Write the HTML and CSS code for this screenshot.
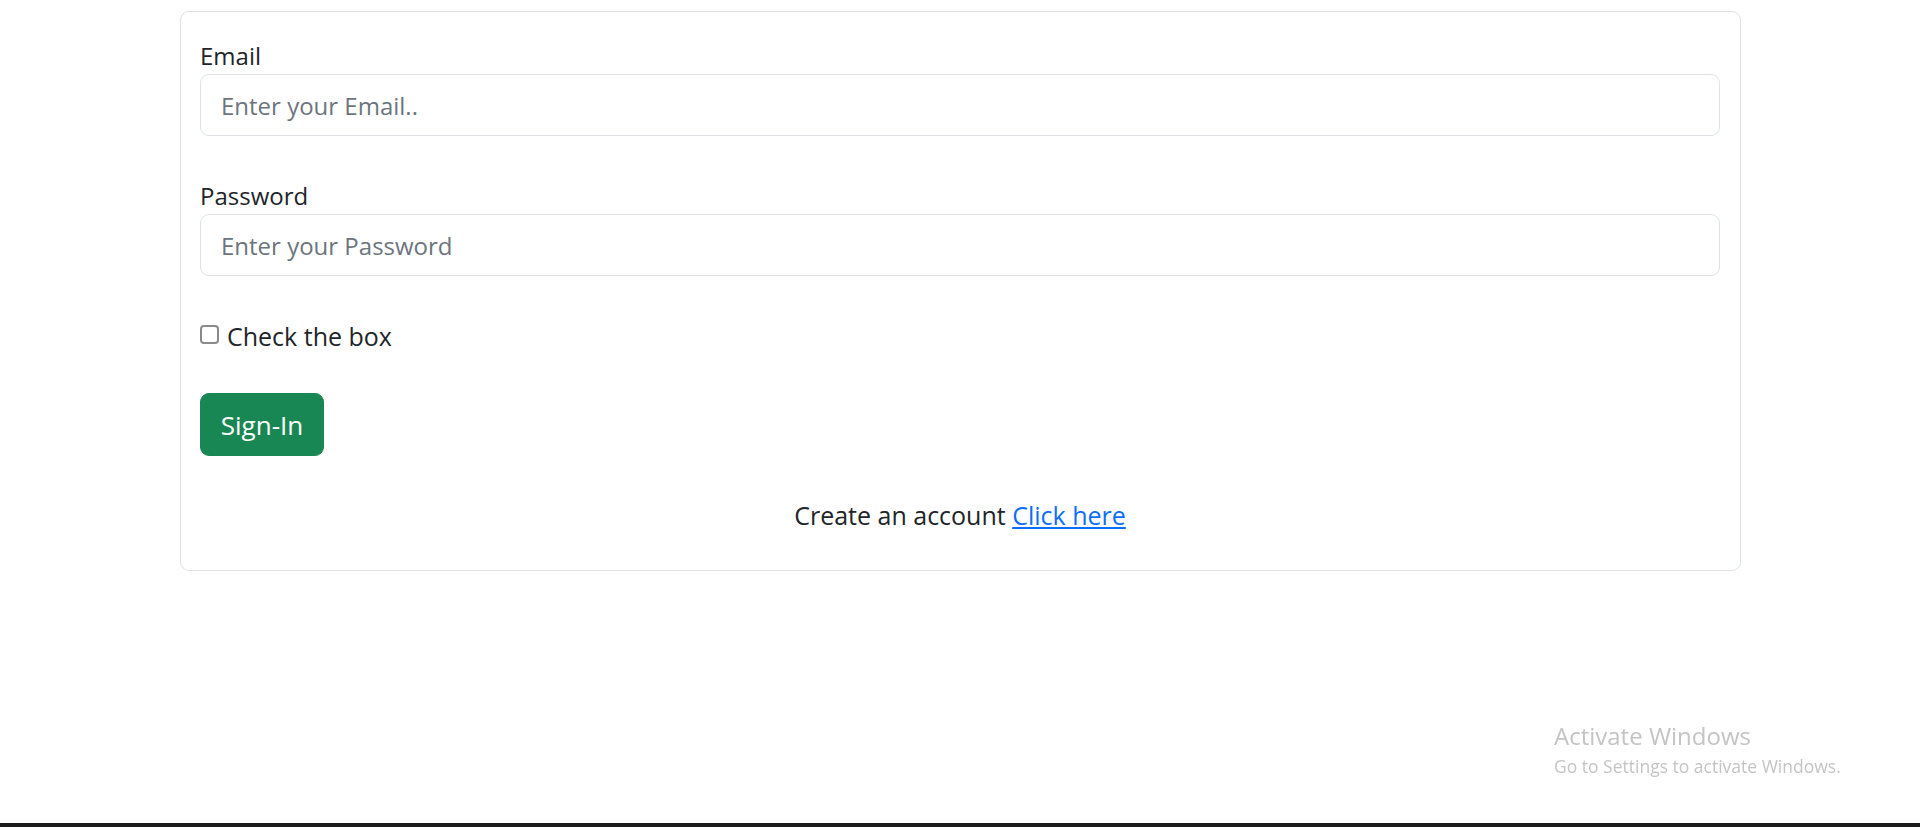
FILE: index.html
```html
<!DOCTYPE html>
<html lang="en">
<head>
<meta charset="utf-8">
<title>Sign In</title>
<link rel="stylesheet" href="styles.css">
</head>
<body>
<main class="page">
  <form class="card">
    <div class="field">
      <label class="label" for="email">Email</label>
      <input class="input" id="email" type="email" placeholder="Enter your Email..">
    </div>
    <div class="field">
      <label class="label" for="password">Password</label>
      <input class="input" id="password" type="password" placeholder="Enter your Password">
    </div>
    <div class="check-row">
      <input class="check" id="check" type="checkbox">
      <label class="check-label" for="check">Check the box</label>
    </div>
    <div class="actions">
      <button class="btn" type="button">Sign-In</button>
    </div>
    <p class="footer-text">Create an account <a class="link" href="#">Click here</a></p>
  </form>
</main>
<div class="watermark">
  <div class="wm-title">Activate Windows</div>
  <div class="wm-sub">Go to Settings to activate Windows.</div>
</div>
<div class="taskbar-edge"></div>
</body>
</html>
```
FILE: styles.css
```css
html, body {
  margin: 0;
  padding: 0;
  background: #ffffff;
}
body {
  font-family: "Open Sans", "Noto Sans", "Liberation Sans", sans-serif;
  color: #212529;
  height: 827px;
  overflow: hidden;
}
.page {
  padding: 11px 179px 0 180px;
}
.card {
  display: flex;
  flex-direction: column;
  border: 1px solid #dee2e6;
  border-radius: 9px;
  padding: 26px 20px 37px 19px;
}
.field {
  display: flex;
  flex-direction: column;
  margin-bottom: 42px;
}
.label {
  font-size: 24px;
  line-height: 36px;
}
.input {
  box-sizing: border-box;
  height: 62px;
  width: 100%;
  border: 1px solid #dee2e6;
  border-radius: 9px;
  padding: 0 20px;
  font-family: inherit;
  font-size: 24px;
  color: #212529;
  background: #fff;
  outline: none;
}
.input::placeholder {
  color: #6c757d;
}
.check-row {
  display: flex;
  align-items: center;
  height: 36px;
  margin-bottom: 39px;
}
.check {
  appearance: none;
  -webkit-appearance: none;
  box-sizing: border-box;
  width: 19px;
  height: 19px;
  margin: 0 8px 0 0;
  border: 2px solid #8a8a8a;
  border-radius: 4px;
  background: #fff;
  position: relative;
  top: -2px;
}
.check-label {
  font-size: 25px;
  line-height: 36px;
}
.actions {
  display: flex;
  margin-bottom: 41px;
}
.btn {
  box-sizing: border-box;
  width: 124px;
  height: 63px;
  border: 1px solid #198754;
  border-radius: 9px;
  background: #198754;
  color: #ffffff;
  font-family: inherit;
  font-size: 26px;
  padding: 0;
}
.footer-text {
  margin: 0;
  text-align: center;
  font-size: 25px;
  line-height: 36px;
}
.link {
  color: #0d6efd;
  text-decoration: underline;
}
.watermark {
  position: fixed;
  left: 1554px;
  top: 720px;
  color: #c4c4c4;
}
.wm-title {
  font-size: 24px;
  line-height: 32px;
}
.wm-sub {
  font-size: 17.5px;
  line-height: 28px;
}
.taskbar-edge {
  position: fixed;
  left: 0;
  right: 0;
  bottom: 0;
  height: 4px;
  background: #1c1c1c;
}
```
